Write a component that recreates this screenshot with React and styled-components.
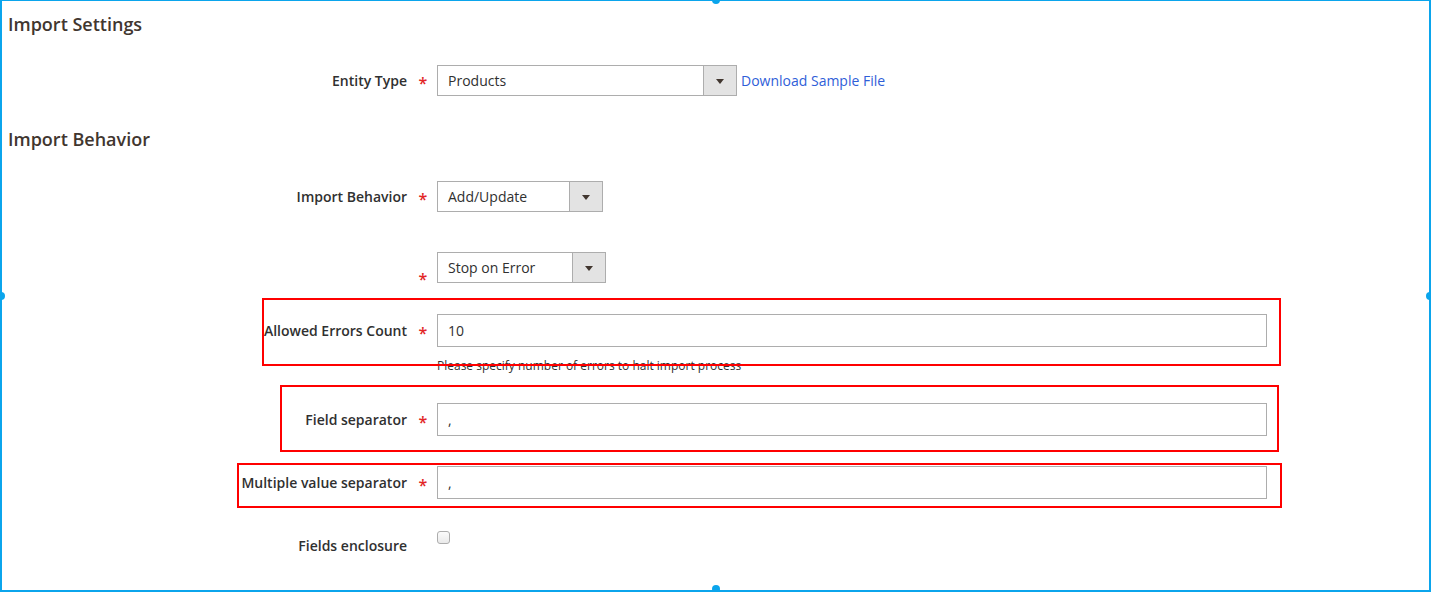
import React from "react";
import styled, { createGlobalStyle } from "styled-components";

const Global = createGlobalStyle`
  html, body { margin: 0; padding: 0; background: #ffffff; }
  body { font-family: "Open Sans", "Noto Sans", sans-serif; color: #303030; }
  * { box-sizing: border-box; }
`;

const Frame = styled.div`
  position: relative;
  width: 1431px;
  height: 592px;
  border: 2px solid #0ba5ec;
  border-top-width: 1px;
  overflow: visible;
`;

const Handle = styled.span`
  position: absolute;
  width: 8px;
  height: 8px;
  border-radius: 50%;
  background: #0ba5ec;
  transform: translate(-50%, -50%);
`;

const Heading = styled.h2`
  margin: ${(p) => p.$mt}px 0 0 6px;
  font-size: 18px;
  line-height: 22px;
  font-weight: 600;
  color: #41362f;
`;

const Row = styled.div`
  display: grid;
  grid-template-columns: 405px 30px 1fr;
  align-items: center;
  margin-top: ${(p) => p.$mt}px;
  min-height: ${(p) => p.$h || 31}px;
`;

const Label = styled.label`
  text-align: right;
  font-size: 14px;
  font-weight: 600;
  color: #303030;
  white-space: nowrap;
`;

const Star = styled.span`
  text-align: center;
  color: #e22626;
  font-size: 16px;
  font-weight: 600;
  line-height: 1;
  padding-left: 2px;
  transform: translateY(${(p) => p.$dy || 2}px);
`;

const Control = styled.div`
  display: flex;
  align-items: center;
  gap: 4px;
`;

const Select = styled.div`
  display: flex;
  width: ${(p) => p.$w}px;
  height: 31px;
  border: 1px solid #adadad;
  background: #fff;
`;

const SelectValue = styled.div`
  flex: 1;
  padding-left: 10px;
  font-size: 14px;
  line-height: 29px;
  color: #303030;
`;

const SelectArrow = styled.div`
  width: 33px;
  border-left: 1px solid #adadad;
  background: #e3e3e3;
  display: flex;
  align-items: center;
  justify-content: center;
  &::after {
    content: "";
    border-left: 4px solid transparent;
    border-right: 4px solid transparent;
    border-top: 5px solid #41362f;
    margin-top: 1px;
  }
`;

const Link = styled.a`
  font-size: 14px;
  color: #2f5ed8;
  text-decoration: none;
  cursor: pointer;
`;

const Input = styled.div`
  width: 830px;
  height: 33px;
  border: 1px solid #adadad;
  padding-left: 10px;
  font-size: 14px;
  line-height: 31px;
  color: #303030;
`;

const Note = styled.div`
  margin: 10px 0 0 435px;
  font-size: 12px;
  line-height: 18px;
  color: #303030;
`;

const Checkbox = styled.span`
  display: block;
  width: 13px;
  height: 13px;
  margin-top: -16px;
  border: 1px solid #adadad;
  border-radius: 3px;
  background: linear-gradient(#fbfbfb, #eaeaea);
`;

const Annotation = styled.div`
  position: absolute;
  border: 2px solid #ff0000;
  pointer-events: none;
`;

const boxes = [
  { l: 262, t: 298, w: 1019, h: 68 },
  { l: 280, t: 385, w: 999, h: 67 },
  { l: 237, t: 463, w: 1045, h: 45 },
];

export default function App() {
  return (
    <>
      <Global />
      <Frame>
        <Heading $mt={12}>Import Settings</Heading>
        <Row $mt={30}>
          <Label>Entity Type</Label>
          <Star>*</Star>
          <Control>
            <Select $w={300}>
              <SelectValue>Products</SelectValue>
              <SelectArrow />
            </Select>
            <Link>Download Sample File</Link>
          </Control>
        </Row>

        <Heading $mt={32}>Import Behavior</Heading>
        <Row $mt={31}>
          <Label>Import Behavior</Label>
          <Star>*</Star>
          <Control>
            <Select $w={166}>
              <SelectValue>Add/Update</SelectValue>
              <SelectArrow />
            </Select>
          </Control>
        </Row>

        <Row $mt={40}>
          <Label />
          <Star $dy={11}>*</Star>
          <Control>
            <Select $w={169}>
              <SelectValue>Stop on Error</SelectValue>
              <SelectArrow />
            </Select>
          </Control>
        </Row>

        <Row $mt={31} $h={33}>
          <Label>Allowed Errors Count</Label>
          <Star>*</Star>
          <Control>
            <Input>10</Input>
          </Control>
        </Row>
        <Note>Please specify number of errors to halt import process</Note>

        <Row $mt={28} $h={33}>
          <Label>Field separator</Label>
          <Star>*</Star>
          <Control>
            <Input>,</Input>
          </Control>
        </Row>

        <Row $mt={30} $h={33}>
          <Label>Multiple value separator</Label>
          <Star>*</Star>
          <Control>
            <Input>,</Input>
          </Control>
        </Row>

        <Row $mt={30} $h={32}>
          <Label>Fields enclosure</Label>
          <span />
          <Control>
            <Checkbox />
          </Control>
        </Row>

        {boxes.map((b, i) => (
          <Annotation
            key={i}
            style={{ left: b.l - 2, top: b.t - 1, width: b.w, height: b.h }}
          />
        ))}

        <Handle style={{ left: "50%", top: -1 }} />
        <Handle style={{ left: -1, top: "50%" }} />
        <Handle style={{ left: "calc(100% + 1px)", top: "50%" }} />
        <Handle style={{ left: "50%", top: "calc(100% - 1px)" }} />
      </Frame>
    </>
  );
}
